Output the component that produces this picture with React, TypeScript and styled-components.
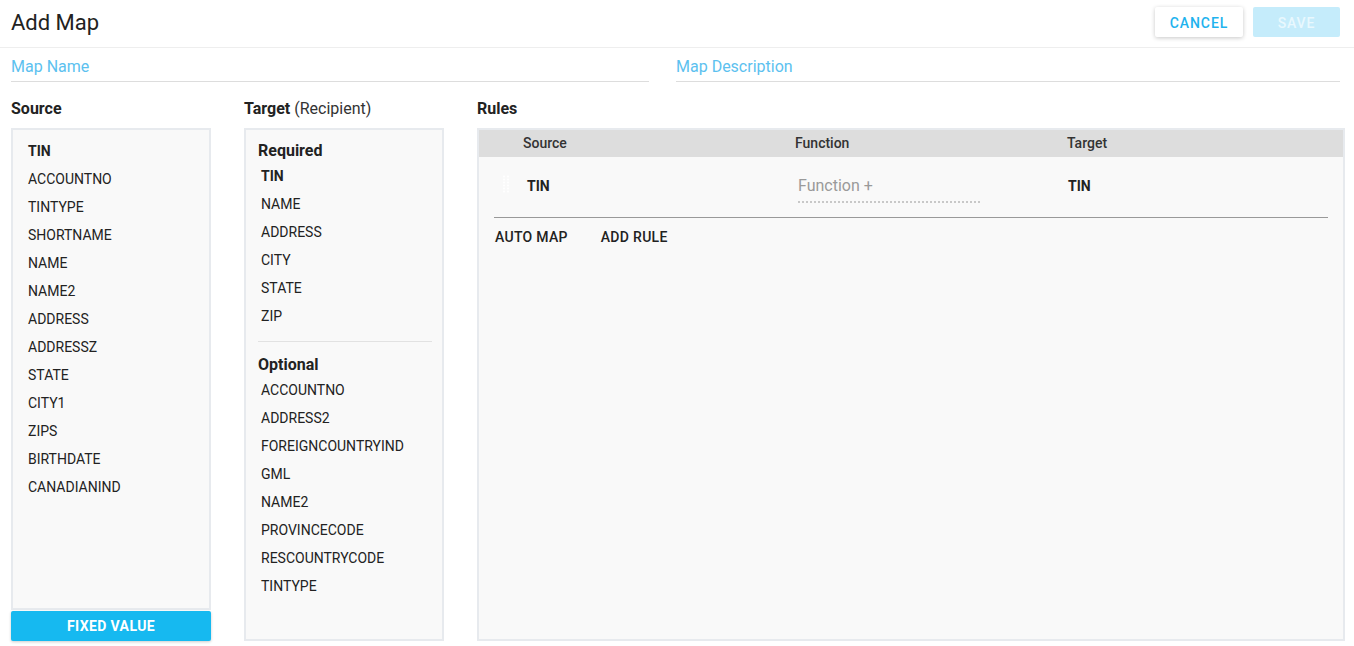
import React from "react";
import styled, { createGlobalStyle } from "styled-components";

const Global = createGlobalStyle`
  html, body { margin: 0; padding: 0; background: #fff; }
  body { font-family: Roboto, "Noto Sans", Arial, sans-serif; color: #222; }
  * { box-sizing: border-box; }
`;

const Page = styled.div`
  width: 1354px;
  height: 646px;
  display: flex;
  flex-direction: column;
  overflow: hidden;
`;

const Header = styled.header`
  display: flex;
  align-items: center;
  justify-content: space-between;
  padding: 7px 14px 10px 11px;
  height: 48px;
  border-bottom: 1px solid #eeeeee;
`;

const Title = styled.h1`
  margin: 1px 0 0;
  font-size: 22px;
  font-weight: 400;
  color: #222;
  line-height: 30px;
`;

const Actions = styled.div`
  display: flex;
  gap: 10px;
`;

const HeaderButton = styled.button<{ $primary?: boolean }>`
  height: 30px;
  width: ${(p) => (p.$primary ? "87px" : "88px")};
  border: none;
  border-radius: 2px;
  font-family: Roboto, Arial, sans-serif;
  font-size: 14px;
  font-weight: 500;
  letter-spacing: 0.9px;
  background: ${(p) => (p.$primary ? "#c5ecfb" : "#ffffff")};
  color: ${(p) => (p.$primary ? "#e9f8fe" : "#1fb3ee")};
  box-shadow: ${(p) => (p.$primary ? "none" : "0 1px 4px rgba(0,0,0,0.22)")};
  padding: 2px 0 0;
`;

const Fields = styled.div`
  display: grid;
  grid-template-columns: 638px 664px;
  column-gap: 27px;
  padding: 9px 0 0 11px;
`;

const Field = styled.div`
  border-bottom: 1px solid #dddddd;
  padding-bottom: 4px;
  font-size: 16px;
  line-height: 20px;
  color: #5cc1ef;
`;

const Main = styled.div`
  display: flex;
  gap: 33px;
  padding: 16px 9px 0 11px;
`;

const Column = styled.section<{ $grow?: boolean }>`
  display: flex;
  flex-direction: column;
  width: ${(p) => (p.$grow ? "auto" : "200px")};
  flex: ${(p) => (p.$grow ? "1" : "none")};
`;

const Heading = styled.h2`
  margin: 0 0 9px;
  padding-top: 1px;
  font-size: 16px;
  line-height: 20px;
  font-weight: 700;
  color: #222;
`;

const Light = styled.span`
  font-weight: 400;
  color: #333;
`;

const Box = styled.div<{ $h: number }>`
  height: ${(p) => p.$h}px;
  background: #f9f9f9;
  border: 2px solid #e7eaee;
  display: flex;
  flex-direction: column;
`;

const List = styled.ul<{ $pt: number; $pl: number }>`
  list-style: none;
  margin: 0;
  padding: ${(p) => p.$pt}px 0 0 ${(p) => p.$pl}px;
`;

const Item = styled.li<{ $bold?: boolean }>`
  height: 28px;
  line-height: 28px;
  font-size: 14px;
  font-weight: ${(p) => (p.$bold ? 700 : 400)};
  color: #222;
`;

const GroupTitle = styled.div`
  font-size: 16px;
  font-weight: 700;
  line-height: 20px;
  margin: 0 0 1px;
  color: #222;
`;

const TargetInner = styled.div`
  padding: 11px 10px 0 12px;
`;

const Divider = styled.hr`
  border: none;
  border-top: 1px solid #e2e2e2;
  margin: 11px 0 13px;
`;

const FixedButton = styled.button`
  margin-top: 1px;
  height: 30px;
  border: none;
  border-radius: 2px;
  background: #16b9f0;
  color: #fff;
  font-family: Roboto, Arial, sans-serif;
  font-size: 14px;
  font-weight: 700;
  letter-spacing: 0.4px;
  box-shadow: 0 1px 3px rgba(0,0,0,0.2);
`;

const RulesHead = styled.div`
  display: grid;
  grid-template-columns: 272px 272px 1fr;
  height: 27px;
  align-items: center;
  padding: 0 0 2px 44px;
  background: #dddddd;
  font-size: 14px;
  font-weight: 500;
  color: #333;
`;

const RuleRow = styled.div`
  display: grid;
  grid-template-columns: 33px 271px 270px 1fr;
  align-items: start;
  margin: 0 15px;
  height: 61px;
  padding-top: 19px;
  border-bottom: 1px solid #999999;
`;

const Handle = styled.svg`
  margin: -1px 0 0 9px;
  display: block;
`;

const Cell = styled.div`
  font-size: 14px;
  font-weight: 700;
  line-height: 20px;
  color: #222;
`;

const FunctionInput = styled.div`
  width: 182px;
  font-size: 16px;
  line-height: 20px;
  color: #9a9a9a;
  padding-bottom: 5px;
  border-bottom: 2px dotted #c8c8c8;
`;

const RuleActions = styled.div`
  display: flex;
  gap: 33px;
  padding: 10px 0 0 16px;
`;

const TextButton = styled.span`
  font-size: 14px;
  font-weight: 500;
  line-height: 18px;
  letter-spacing: 0.3px;
  color: #222;
`;

const sourceItems = [
  "TIN", "ACCOUNTNO", "TINTYPE", "SHORTNAME", "NAME", "NAME2", "ADDRESS",
  "ADDRESSZ", "STATE", "CITY1", "ZIPS", "BIRTHDATE", "CANADIANIND",
];
const required = ["TIN", "NAME", "ADDRESS", "CITY", "STATE", "ZIP"];
const optional = [
  "ACCOUNTNO", "ADDRESS2", "FOREIGNCOUNTRYIND", "GML", "NAME2",
  "PROVINCECODE", "RESCOUNTRYCODE", "TINTYPE",
];

const DragHandle = () => (
  <Handle width="6" height="18" viewBox="0 0 6 18">
    {[0, 1, 2, 3, 4, 5].map((r) =>
      [1, 5].map((c) => (
        <circle key={`${r}-${c}`} cx={c} cy={1.5 + r * 3} r="1" fill="#ffffff" />
      ))
    )}
  </Handle>
);

export default function App() {
  return (
    <Page>
      <Global />
      <Header>
        <Title>Add Map</Title>
        <Actions>
          <HeaderButton>CANCEL</HeaderButton>
          <HeaderButton $primary>SAVE</HeaderButton>
        </Actions>
      </Header>
      <Fields>
        <Field>Map Name</Field>
        <Field>Map Description</Field>
      </Fields>
      <Main>
        <Column>
          <Heading>Source</Heading>
          <Box $h={482}>
            <List $pt={7} $pl={15}>
              {sourceItems.map((s, i) => (
                <Item key={s} $bold={i === 0}>{s}</Item>
              ))}
            </List>
          </Box>
          <FixedButton>FIXED VALUE</FixedButton>
        </Column>
        <Column>
          <Heading>
            Target <Light>(Recipient)</Light>
          </Heading>
          <Box $h={513}>
            <TargetInner>
              <GroupTitle>Required</GroupTitle>
              <List $pt={0} $pl={3}>
                {required.map((s, i) => (
                  <Item key={s} $bold={i === 0}>{s}</Item>
                ))}
              </List>
              <Divider />
              <GroupTitle>Optional</GroupTitle>
              <List $pt={0} $pl={3}>
                {optional.map((s) => (
                  <Item key={s}>{s}</Item>
                ))}
              </List>
            </TargetInner>
          </Box>
        </Column>
        <Column $grow>
          <Heading>Rules</Heading>
          <Box $h={513}>
            <RulesHead>
              <span>Source</span>
              <span>Function</span>
              <span>Target</span>
            </RulesHead>
            <RuleRow>
              <DragHandle />
              <Cell>TIN</Cell>
              <FunctionInput>Function +</FunctionInput>
              <Cell>TIN</Cell>
            </RuleRow>
            <RuleActions>
              <TextButton>AUTO MAP</TextButton>
              <TextButton>ADD RULE</TextButton>
            </RuleActions>
          </Box>
        </Column>
      </Main>
    </Page>
  );
}
